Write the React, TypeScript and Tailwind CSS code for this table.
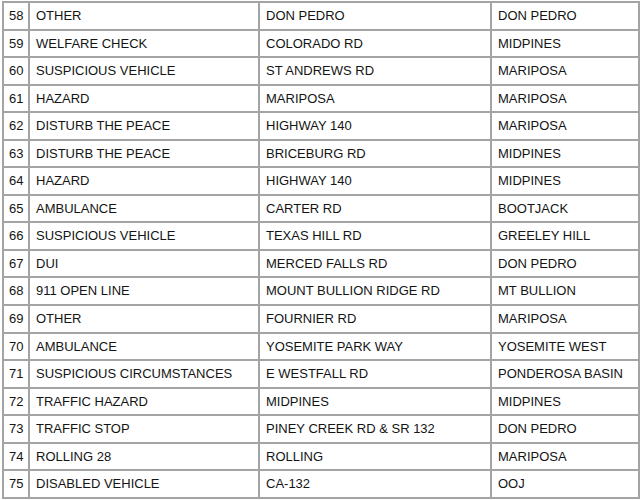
import React from 'react'

const ROWS: [number, string, string, string][] = [
  [58, 'OTHER', 'DON PEDRO', 'DON PEDRO'],
  [59, 'WELFARE CHECK', 'COLORADO RD', 'MIDPINES'],
  [60, 'SUSPICIOUS VEHICLE', 'ST ANDREWS RD', 'MARIPOSA'],
  [61, 'HAZARD', 'MARIPOSA', 'MARIPOSA'],
  [62, 'DISTURB THE PEACE', 'HIGHWAY 140', 'MARIPOSA'],
  [63, 'DISTURB THE PEACE', 'BRICEBURG RD', 'MIDPINES'],
  [64, 'HAZARD', 'HIGHWAY 140', 'MIDPINES'],
  [65, 'AMBULANCE', 'CARTER RD', 'BOOTJACK'],
  [66, 'SUSPICIOUS VEHICLE', 'TEXAS HILL RD', 'GREELEY HILL'],
  [67, 'DUI', 'MERCED FALLS RD', 'DON PEDRO'],
  [68, '911 OPEN LINE', 'MOUNT BULLION RIDGE RD', 'MT BULLION'],
  [69, 'OTHER', 'FOURNIER RD', 'MARIPOSA'],
  [70, 'AMBULANCE', 'YOSEMITE PARK WAY', 'YOSEMITE WEST'],
  [71, 'SUSPICIOUS CIRCUMSTANCES', 'E WESTFALL RD', 'PONDEROSA BASIN'],
  [72, 'TRAFFIC HAZARD', 'MIDPINES', 'MIDPINES'],
  [73, 'TRAFFIC STOP', 'PINEY CREEK RD & SR 132', 'DON PEDRO'],
  [74, 'ROLLING 28', 'ROLLING', 'MARIPOSA'],
  [75, 'DISABLED VEHICLE', 'CA-132', 'OOJ'],
]

const cell = 'border-2 border-[#a4a4a4] pl-[6px] pr-[4px] py-0 align-middle whitespace-nowrap'

export default function App() {
  return (
    <div className="w-[640px] h-[500px] bg-white pt-px pl-[2px]" style={{ fontFamily: '"Liberation Sans", Arial, sans-serif' }}>
      <table className="border-collapse table-fixed w-[636px] text-[13px] text-[#141414]">
        <colgroup>
          <col className="w-[26px]" />
          <col className="w-[230px]" />
          <col className="w-[232px]" />
          <col className="w-[148px]" />
        </colgroup>
        <tbody>
          {ROWS.map(([n, type, street, area]) => (
            <tr key={n} className="h-[27.55px]">
              <td className={cell + ' !pl-[5px]'}>{n}</td>
              <td className={cell}>{type}</td>
              <td className={cell}>{street}</td>
              <td className={cell}>{area}</td>
            </tr>
          ))}
        </tbody>
      </table>
    </div>
  )
}
